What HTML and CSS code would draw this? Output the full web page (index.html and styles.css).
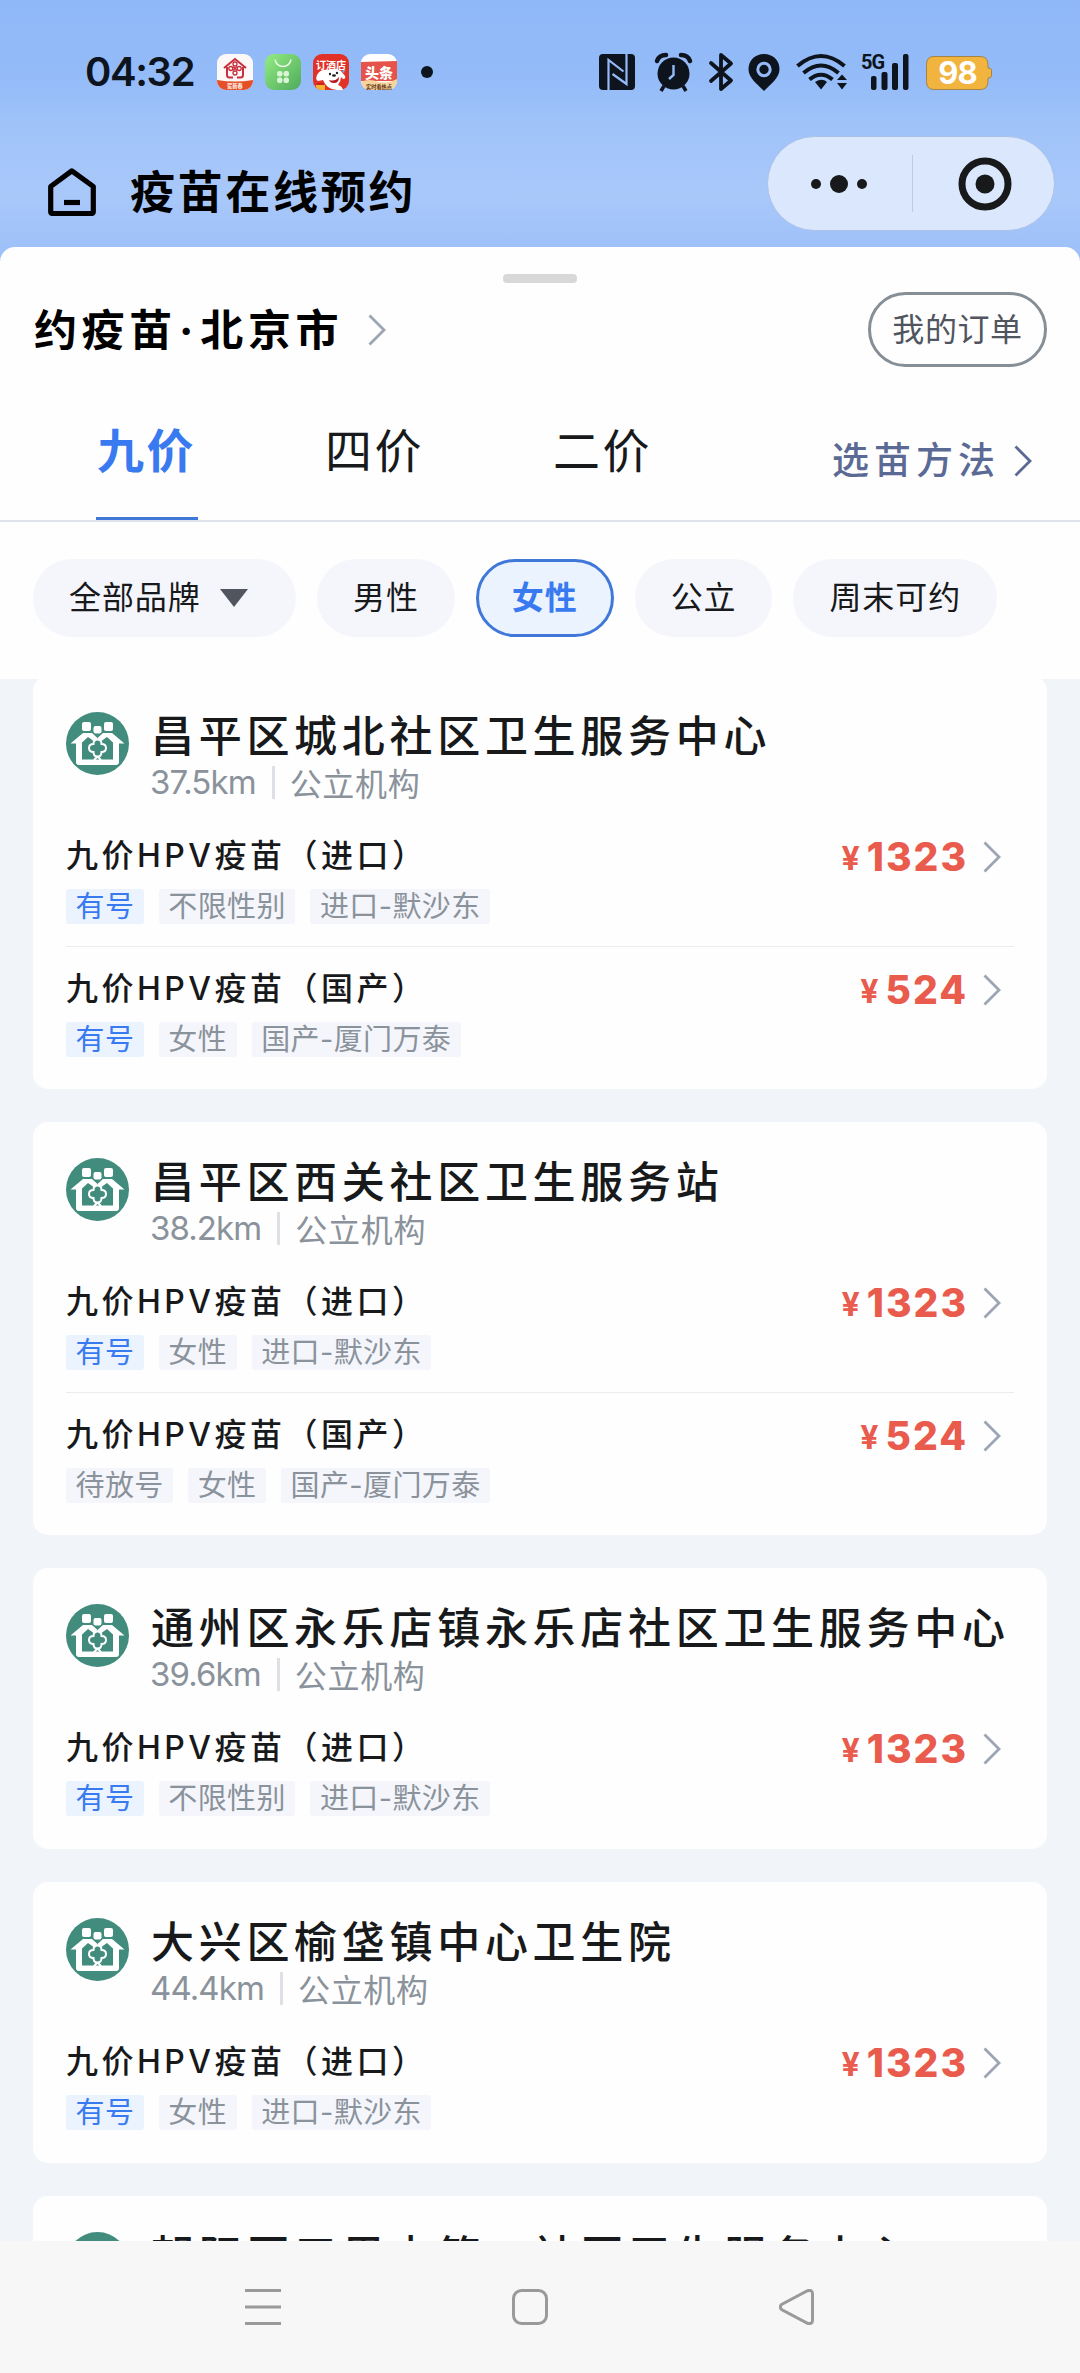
FILE: index.html
```html
<!DOCTYPE html>
<html lang="zh-CN">
<head>
<meta charset="utf-8">
<title>疫苗在线预约</title>
<link rel="stylesheet" href="styles.css">
</head>
<body>
<svg class="sprite" aria-hidden="true">
  <symbol id="chevron" viewBox="0 0 18 32"><path d="M1.5 1.5 16 16 1.5 30.5" fill="none" stroke="currentColor" stroke-width="2.8"/></symbol>
  <symbol id="clinic" viewBox="0 0 63 63">
    <circle cx="31.5" cy="31.5" r="31.5" fill="#418c7c"/>
    <g fill="#fff">
      <rect x="16" y="10" width="9" height="9" rx="2"/>
      <rect x="38" y="10" width="9" height="9" rx="2"/>
      <rect x="27.500" y="14" width="8" height="7.500" rx="2"/>
      <path d="M4.500 31.500 17 21h9l5.500 5 5.500-5h9l12.500 10.500H53V50q0 3-3 3H13q-3 0-3-3V31.500z"/>
    </g>
    <path d="M16 30.500 22 25l5 3.500 4.500-2 4.500 2 5-3.500 6 5.500V47.500H16z" fill="#418c7c"/>
    <path d="M25 25l4 4M38 25l-4 4M28 48l3.500-3.500L35 48" fill="none" stroke="#fff" stroke-width="2"/>
    <path d="M31.500 27.500q4 0 4 4.500 4.500 0 4.500 4t-4.500 4q0 4.500-4 4.500t-4-4.500q-4.500 0-4.500-4t4.500-4q0-4.500 4-4.500z" fill="#418c7c" stroke="#fff" stroke-width="2"/>
  </symbol>
</svg>

<div class="phone">
  <header class="top">
    <div class="status">
      <span class="time">04:32</span>
      <div class="apps">
        <svg width="36" height="36" viewBox="0 0 36 36">
          <rect width="36" height="36" rx="9" fill="#fdf8f8"/>
          <path d="M0 26q18 3 36 0v1a9 9 0 0 1-9 9H9a9 9 0 0 1-9-9z" fill="#e65027"/>
          <path d="M7 14 18 5l11 9M10 13v8q0 2.500 2.500 2.500H16M26 13v8q0 2.500-2.500 2.500H20" fill="none" stroke="#c72f3c" stroke-width="2"/>
          <g fill="none" stroke="#c72f3c" stroke-width="1.300"><circle cx="18" cy="10" r="2"/><circle cx="13.800" cy="14.500" r="2"/><circle cx="22.200" cy="14.500" r="2"/><circle cx="18" cy="19" r="2"/><path d="M16 12.500l4 4M20 12.500l-4 4"/></g>
          <text x="10" y="34" class="micro" fill="#fff">贺新春</text>
        </svg>
        <svg width="36" height="36" viewBox="0 0 36 36">
          <defs><linearGradient id="g" x1="0" y1="0" x2="1" y2="1"><stop offset="0" stop-color="#92ec82"/><stop offset="1" stop-color="#4faa5d"/></linearGradient></defs>
          <rect width="36" height="36" rx="9" fill="url(#g)"/>
          <path d="M10 5.500q1.500 7 8 7t8-7" fill="none" stroke="#e9fbe4" stroke-width="1.500"/>
          <g fill="#d9f5d3"><rect x="12" y="17" width="5.500" height="5.500" rx="2.200"/><rect x="18.500" y="17" width="5.500" height="5.500" rx="2.200"/><rect x="12" y="23.500" width="5.500" height="5.500" rx="2.200"/><rect x="18.500" y="23.500" width="5.500" height="5.500" rx="2.200"/></g>
        </svg>
        <svg width="36" height="36" viewBox="0 0 36 36">
          <rect width="36" height="36" rx="9" fill="#e23228"/>
          <text x="3" y="15" class="mini" fill="#fff">订酒店</text>
          <path d="M4 21q-2 5 1 6l5-1q2 5 5 7 4 3 9 3h6q-1-4-5-5 3-4 3-8l2 2q3 0 2-3l-4-5q-6-4-13-1-8-1-11 5z" fill="#fff"/>
          <path d="M16 26q6 2 10-3 0 6-5 6-4 0-5-3z" fill="#b71922"/>
          <circle cx="17" cy="20" r="1.200" fill="#222"/><circle cx="24" cy="19" r="1.200" fill="#222"/><ellipse cx="21" cy="21.500" rx="2" ry="1.200" fill="#222"/>
          <path d="M29 17l3-2-1 4z" fill="#68b6ee"/>
          <path d="M3 31h9v5H9q-4 0-6-3z" fill="#f6b42e"/><path d="M4 30h7" stroke="#c2261d" stroke-width="2"/>
        </svg>
        <svg width="36" height="36" viewBox="0 0 36 36">
          <rect width="36" height="36" rx="9" fill="#fff"/>
          <path d="M0 8 36 7v20H0z" fill="#e5534a"/>
          <path d="M0 28q7-4 18 0 9 2 18-3v2a9 9 0 0 1-9 9H9a9 9 0 0 1-9-9z" fill="#f6d49b"/>
          <text x="4" y="24" class="headline" fill="#fff">头条</text>
          <text x="5" y="34.500" class="micro" fill="#5c3014">实时看热点</text>
        </svg>
        <i class="more-dot"></i>
      </div>
      <svg class="sys" width="396" height="42" viewBox="597 51 396 42" fill="#0e141d">
        <rect x="599" y="54" width="36" height="36" rx="4"/>
        <path d="M608.500 90V60l15 11.500M626.500 54v30L612.500 74" fill="none" stroke="#94bbf8" stroke-width="2.200"/>
        <circle cx="673.500" cy="73.500" r="16"/>
        <path d="M657 61q2-6 9-6M690 61q-2-6-9-6" fill="none" stroke="#0e141d" stroke-width="4.500" stroke-linecap="round"/>
        <path d="M664 86l-3 5M683 86l3 5" stroke="#0e141d" stroke-width="3.500"/>
        <path d="M673.500 65v10l-4.500 4" fill="none" stroke="#94bbf8" stroke-width="2.400"/>
        <path d="M711 63 731 80.500 721 89V55l10 8.500L711 81" fill="none" stroke="#0e141d" stroke-width="3.800" stroke-linejoin="round" stroke-linecap="round"/>
        <path d="M764 54c9 0 15.500 6.500 15.500 15 0 9-8 14-15.500 22-7.500-8-15.500-13-15.500-22 0-8.500 6.500-15 15.500-15z"/>
        <circle cx="764" cy="69.500" r="6.200" stroke="#94bbf8" stroke-width="3"/>
        <g fill="none" stroke="#0e141d" stroke-width="4"><path d="M797.500 66q23.500-20 47 0"/><path d="M803.500 73q17.500-15 35 0"/><path d="M809.500 79.500q11.500-9.500 23 0"/></g>
        <path d="M815 82q7-4.500 12 0l-6 7.500z"/>
        <path d="M837 80h10l-5-5.500zM837 83h10l-5 6.500z"/>
        <text x="861" y="69" class="net">5G</text>
        <rect x="871" y="76" width="5.500" height="14" rx="2"/><rect x="881.500" y="72" width="6" height="18" rx="2"/><rect x="892" y="63" width="6" height="27" rx="2"/><rect x="903" y="54" width="5.500" height="36" rx="2"/>
        <path d="M934 56.500h46q8 0 8 8V68q3.500 0 3.500 2v6q0 2-3.500 2v3.500q0 8-8 8h-46q-7.500 0-7.500-8v-17q0-8 7.500-8z" fill="#f1b43f" stroke="#a58347" stroke-width="1"/>
        <text x="957.500" y="84.300" class="battery" fill="#fff">98</text>
      </svg>
    </div>
    <div class="titlebar">
      <svg width="48" height="48" viewBox="0 0 48 48" fill="none" stroke="#000" stroke-width="5.200" stroke-linejoin="round"><path d="M2.700 18.500 23.800 2.800 45.300 18.500V43.500q0 2-2 2H4.700q-2 0-2-2z"/><path d="M16 34.500h16"/></svg>
      <h1>疫苗在线预约</h1>
      <div class="capsule">
        <span class="dots"><i></i><i></i><i></i></span>
        <span class="rule"></span>
        <svg width="54" height="54" viewBox="0 0 54 54"><circle cx="27" cy="27" r="23" fill="none" stroke="#17191b" stroke-width="7"/><circle cx="27" cy="27" r="9.500" fill="#17191b"/></svg>
      </div>
    </div>
  </header>

  <section class="sheet">
    <div class="handle"></div>
    <div class="city-row">
      <h2>约疫苗<span class="mid">·</span>北京市</h2>
      <svg class="chev"><use href="#chevron"/></svg>
      <button class="orders">我的订单</button>
    </div>
    <nav class="tabs">
      <a class="tab active">九价</a><a class="tab">四价</a><a class="tab">二价</a>
      <a class="how">选苗方法<svg class="chev"><use href="#chevron"/></svg></a>
    </nav>
    <div class="filters">
      <span class="pill brand">全部品牌<i class="caret"></i></span><span class="pill">男性</span><span class="pill on">女性</span><span class="pill">公立</span><span class="pill">周末可约</span>
    </div>
  </section>

  <main class="list">
    <article class="card">
      <div class="head"><svg class="logo"><use href="#clinic"/></svg><div><h3>昌平区城北社区卫生服务中心</h3><p class="meta"><span class="km">37.5km</span><span>公立机构</span></p></div></div>
      <div class="item"><div><h4>九价HPV疫苗（进口）</h4><div class="tags"><b>有号</b><i>不限性别</i><i>进口-默沙东</i></div></div><div class="price"><small>¥</small>1323<svg class="chev"><use href="#chevron"/></svg></div></div>
      <div class="item"><div><h4>九价HPV疫苗（国产）</h4><div class="tags"><b>有号</b><i>女性</i><i>国产-厦门万泰</i></div></div><div class="price"><small>¥</small>524<svg class="chev"><use href="#chevron"/></svg></div></div>
    </article>
    <article class="card">
      <div class="head"><svg class="logo"><use href="#clinic"/></svg><div><h3>昌平区西关社区卫生服务站</h3><p class="meta"><span class="km">38.2km</span><span>公立机构</span></p></div></div>
      <div class="item"><div><h4>九价HPV疫苗（进口）</h4><div class="tags"><b>有号</b><i>女性</i><i>进口-默沙东</i></div></div><div class="price"><small>¥</small>1323<svg class="chev"><use href="#chevron"/></svg></div></div>
      <div class="item"><div><h4>九价HPV疫苗（国产）</h4><div class="tags"><i>待放号</i><i>女性</i><i>国产-厦门万泰</i></div></div><div class="price"><small>¥</small>524<svg class="chev"><use href="#chevron"/></svg></div></div>
    </article>
    <article class="card">
      <div class="head"><svg class="logo"><use href="#clinic"/></svg><div><h3>通州区永乐店镇永乐店社区卫生服务中心</h3><p class="meta"><span class="km">39.6km</span><span>公立机构</span></p></div></div>
      <div class="item"><div><h4>九价HPV疫苗（进口）</h4><div class="tags"><b>有号</b><i>不限性别</i><i>进口-默沙东</i></div></div><div class="price"><small>¥</small>1323<svg class="chev"><use href="#chevron"/></svg></div></div>
    </article>
    <article class="card">
      <div class="head"><svg class="logo"><use href="#clinic"/></svg><div><h3>大兴区榆垡镇中心卫生院</h3><p class="meta"><span class="km">44.4km</span><span>公立机构</span></p></div></div>
      <div class="item"><div><h4>九价HPV疫苗（进口）</h4><div class="tags"><b>有号</b><i>女性</i><i>进口-默沙东</i></div></div><div class="price"><small>¥</small>1323<svg class="chev"><use href="#chevron"/></svg></div></div>
    </article>
    <article class="card">
      <div class="head"><svg class="logo"><use href="#clinic"/></svg><div><h3>朝阳区三里屯第二社区卫生服务中心</h3></div></div>
    </article>
  </main>

  <footer class="navbar">
    <svg width="36" height="36" viewBox="0 0 36 36"><path d="M0 1.500h36M0 18h36M0 34.500h36"/></svg>
    <svg width="36" height="36" viewBox="0 0 36 36"><rect x="1.500" y="1.500" width="33" height="33" rx="8"/></svg>
    <svg width="36" height="36" viewBox="0 0 36 36"><path d="M2.500 15.500 28.500 1.700q5-1.200 5 3v26.600q0 4.200-5 3L2.500 20.500q-2.400-2.500 0-5z"/></svg>
  </footer>
</div>
</body>
</html>
```
FILE: styles.css
```css
* { box-sizing: border-box; margin: 0; padding: 0; }
body { font-family: Inter, "Noto Sans CJK SC", sans-serif; color: #17191b; background: #f7f7f7; }
i { font-style: normal; }
.sprite { display: none; }
.phone { width: 1080px; height: 2373px; display: flex; flex-direction: column; overflow: hidden; }

.top { height: 261px; flex: none; background: linear-gradient(#8fb8f8 0, #93bbf8 72px, #a0c3f9 130px, #a9c8fa 195px, #9ec1f9 247px); }
.status { height: 144px; padding: 0 87px 0 85px; display: flex; align-items: center; }
.time { width: 132px; font-size: 40px; line-height: 48px; font-weight: 600; letter-spacing: -1.4px; color: #0e141d; }
.apps { display: flex; align-items: center; gap: 12px; }
.more-dot { width: 12px; height: 12px; margin-left: 12px; border-radius: 50%; background: #0e141d; }
.sys { margin-left: auto; }
.micro { font-size: 5.200px; font-weight: 700; }
.mini { font-size: 10px; font-weight: 700; }
.headline { font-size: 14px; font-weight: 800; }
.net { font-family: Roboto, sans-serif; font-size: 20px; font-weight: 700; letter-spacing: -1px; }
.battery { font-size: 31px; font-weight: 700; text-anchor: middle; letter-spacing: -1px; }

.titlebar { height: 95px; margin-top: -8px; padding: 0 25px 0 48px; display: flex; align-items: center; }
.titlebar > svg { margin-top: 16px; }
.titlebar h1 { margin: 19px 0 0 34px; font-size: 45px; line-height: 60px; font-weight: 700; letter-spacing: 2.700px; color: #000; }
.capsule { width: 288px; height: 95px; margin-left: auto; padding: 0 42px 0 43px; display: flex; align-items: center; justify-content: space-between; border: 1px solid #a9c1e6; border-radius: 48px; background: #dae7fc; }
.dots { display: flex; align-items: center; gap: 9px; }
.dots i { width: 10px; height: 10px; border-radius: 50%; background: #17191b; }
.dots i:nth-child(2) { width: 18px; height: 18px; }
.rule { width: 1px; height: 57px; margin-right: 0; background: #bfcbe0; }

.sheet { height: 432px; margin-top: -14px; flex: none; background: #fefefe; border-radius: 15px 15px 0 0; }
.handle { width: 74px; height: 9px; margin: 0 auto; transform: translateY(27px); border-radius: 4px; background: #d8d8d8; }
.city-row { height: 75px; margin-top: 36px; padding: 0 33px; display: flex; align-items: center; }
.city-row h2 { padding-left: 1px; font-size: 43px; line-height: 60px; font-weight: 700; letter-spacing: 4.600px; color: #000; }
.mid { display: inline-block; width: 23.500px; text-align: center; }
.chev { width: 18px; height: 32px; color: #9ca5b3; flex: none; }
.city-row .chev { margin-left: 25px; }
.orders { width: 179px; height: 75px; margin-left: auto; border: 3px solid #868e96; border-radius: 38px; background: none; font: 400 32px/60px Inter, "Noto Sans CJK SC", sans-serif; letter-spacing: .6px; color: #50555e; }
.tabs { height: 155px; padding: 0 48px 0 96px; display: flex; align-items: flex-start; border-bottom: 2px solid #dfe2ea; }
.tab { width: 102px; height: 153px; margin-right: 126px; padding-top: 54px; font-size: 47px; line-height: 60px; letter-spacing: 2.500px; white-space: nowrap; text-indent: 1px; }
.tab.active { font-weight: 700; color: #397af0; border-bottom: 3px solid #3f78d8; }
.how { display: flex; align-items: center; gap: 14px; margin: 64px 0 0 auto; font-size: 37px; line-height: 60px; font-weight: 500; letter-spacing: 5px; color: #5b6a94; }
.how .chev { color: inherit; }
.filters { padding: 37px 33px 0; display: flex; gap: 21px; }
.pill { height: 78px; padding: 0 36px; border: 0 solid #3f78d8; border-radius: 39px; background: #f5f6fb; font-size: 32px; line-height: 76px; letter-spacing: .9px; display: flex; align-items: center; }
.pill.on { padding: 0 33px; border-width: 3px; background: #eaf3fe; font-weight: 700; line-height: 70px; color: #397af0; }
.brand { width: 263px; }
.caret { margin-left: 19px; border: 14px solid transparent; border-top: 18px solid #50555f; border-bottom: 0; }

.list { height: 1562px; flex: none; overflow: hidden; padding: 0 33px; background: #f1f5f9; }
.card { height: 281px; padding: 0 33px; margin-bottom: 33px; border-radius: 15px; background: #fefefe; }
.card:has(.item + .item) { height: 413px; }
.card:first-child { margin-top: -3px; }
.head { height: 138px; display: flex; gap: 21px; }
.logo { width: 63px; height: 63px; margin-top: 36px; flex: none; }
.head h3 { margin-top: 30px; padding-left: 1px; font-size: 43px; line-height: 60px; font-weight: 500; letter-spacing: 4.700px; white-space: nowrap; }
.meta { display: flex; align-items: center; height: 40px; margin-top: -4px; font-size: 32px; color: #8a929b; letter-spacing: .7px; }
.km { height: 33px; line-height: 33px; margin-right: 15px; padding-right: 16px; border-right: 3px solid #dde0e5; font-size: 33px; letter-spacing: -.9px; }
.item { height: 110px; display: flex; justify-content: space-between; }
.item + .item { height: 111px; margin-top: 22px; border-top: 1px solid #eaeef0; }
.item h4 { margin-top: 17px; font-size: 32px; line-height: 50px; font-weight: 500; letter-spacing: 3.500px; }
.tags { margin-top: 8px; display: flex; gap: 15px; }
.tags > * { height: 35px; padding: 0 9.500px; border-radius: 3px; background: #f5f6fb; font-size: 29px; line-height: 35px; font-weight: 400; letter-spacing: .4px; color: #8a929b; }
.tags > b { background: #eaf3fe; color: #397af0; }
.price { height: 50px; margin: 18px 13px 0 0; display: flex; align-items: center; font-size: 39px; line-height: 50px; font-weight: 800; letter-spacing: 2px; color: #e95b4d; }
.price small { margin-right: 7px; padding-top: 3px; font-size: 32px; font-weight: 700; letter-spacing: 0; }
.price .chev { margin-left: 15px; }

.navbar { height: 132px; padding: 0 265px 0 245px; flex: none; display: flex; align-items: center; justify-content: space-between; background: #f7f7f7; }
.navbar svg { fill: none; stroke: #9a9a9a; stroke-width: 3; }
```
